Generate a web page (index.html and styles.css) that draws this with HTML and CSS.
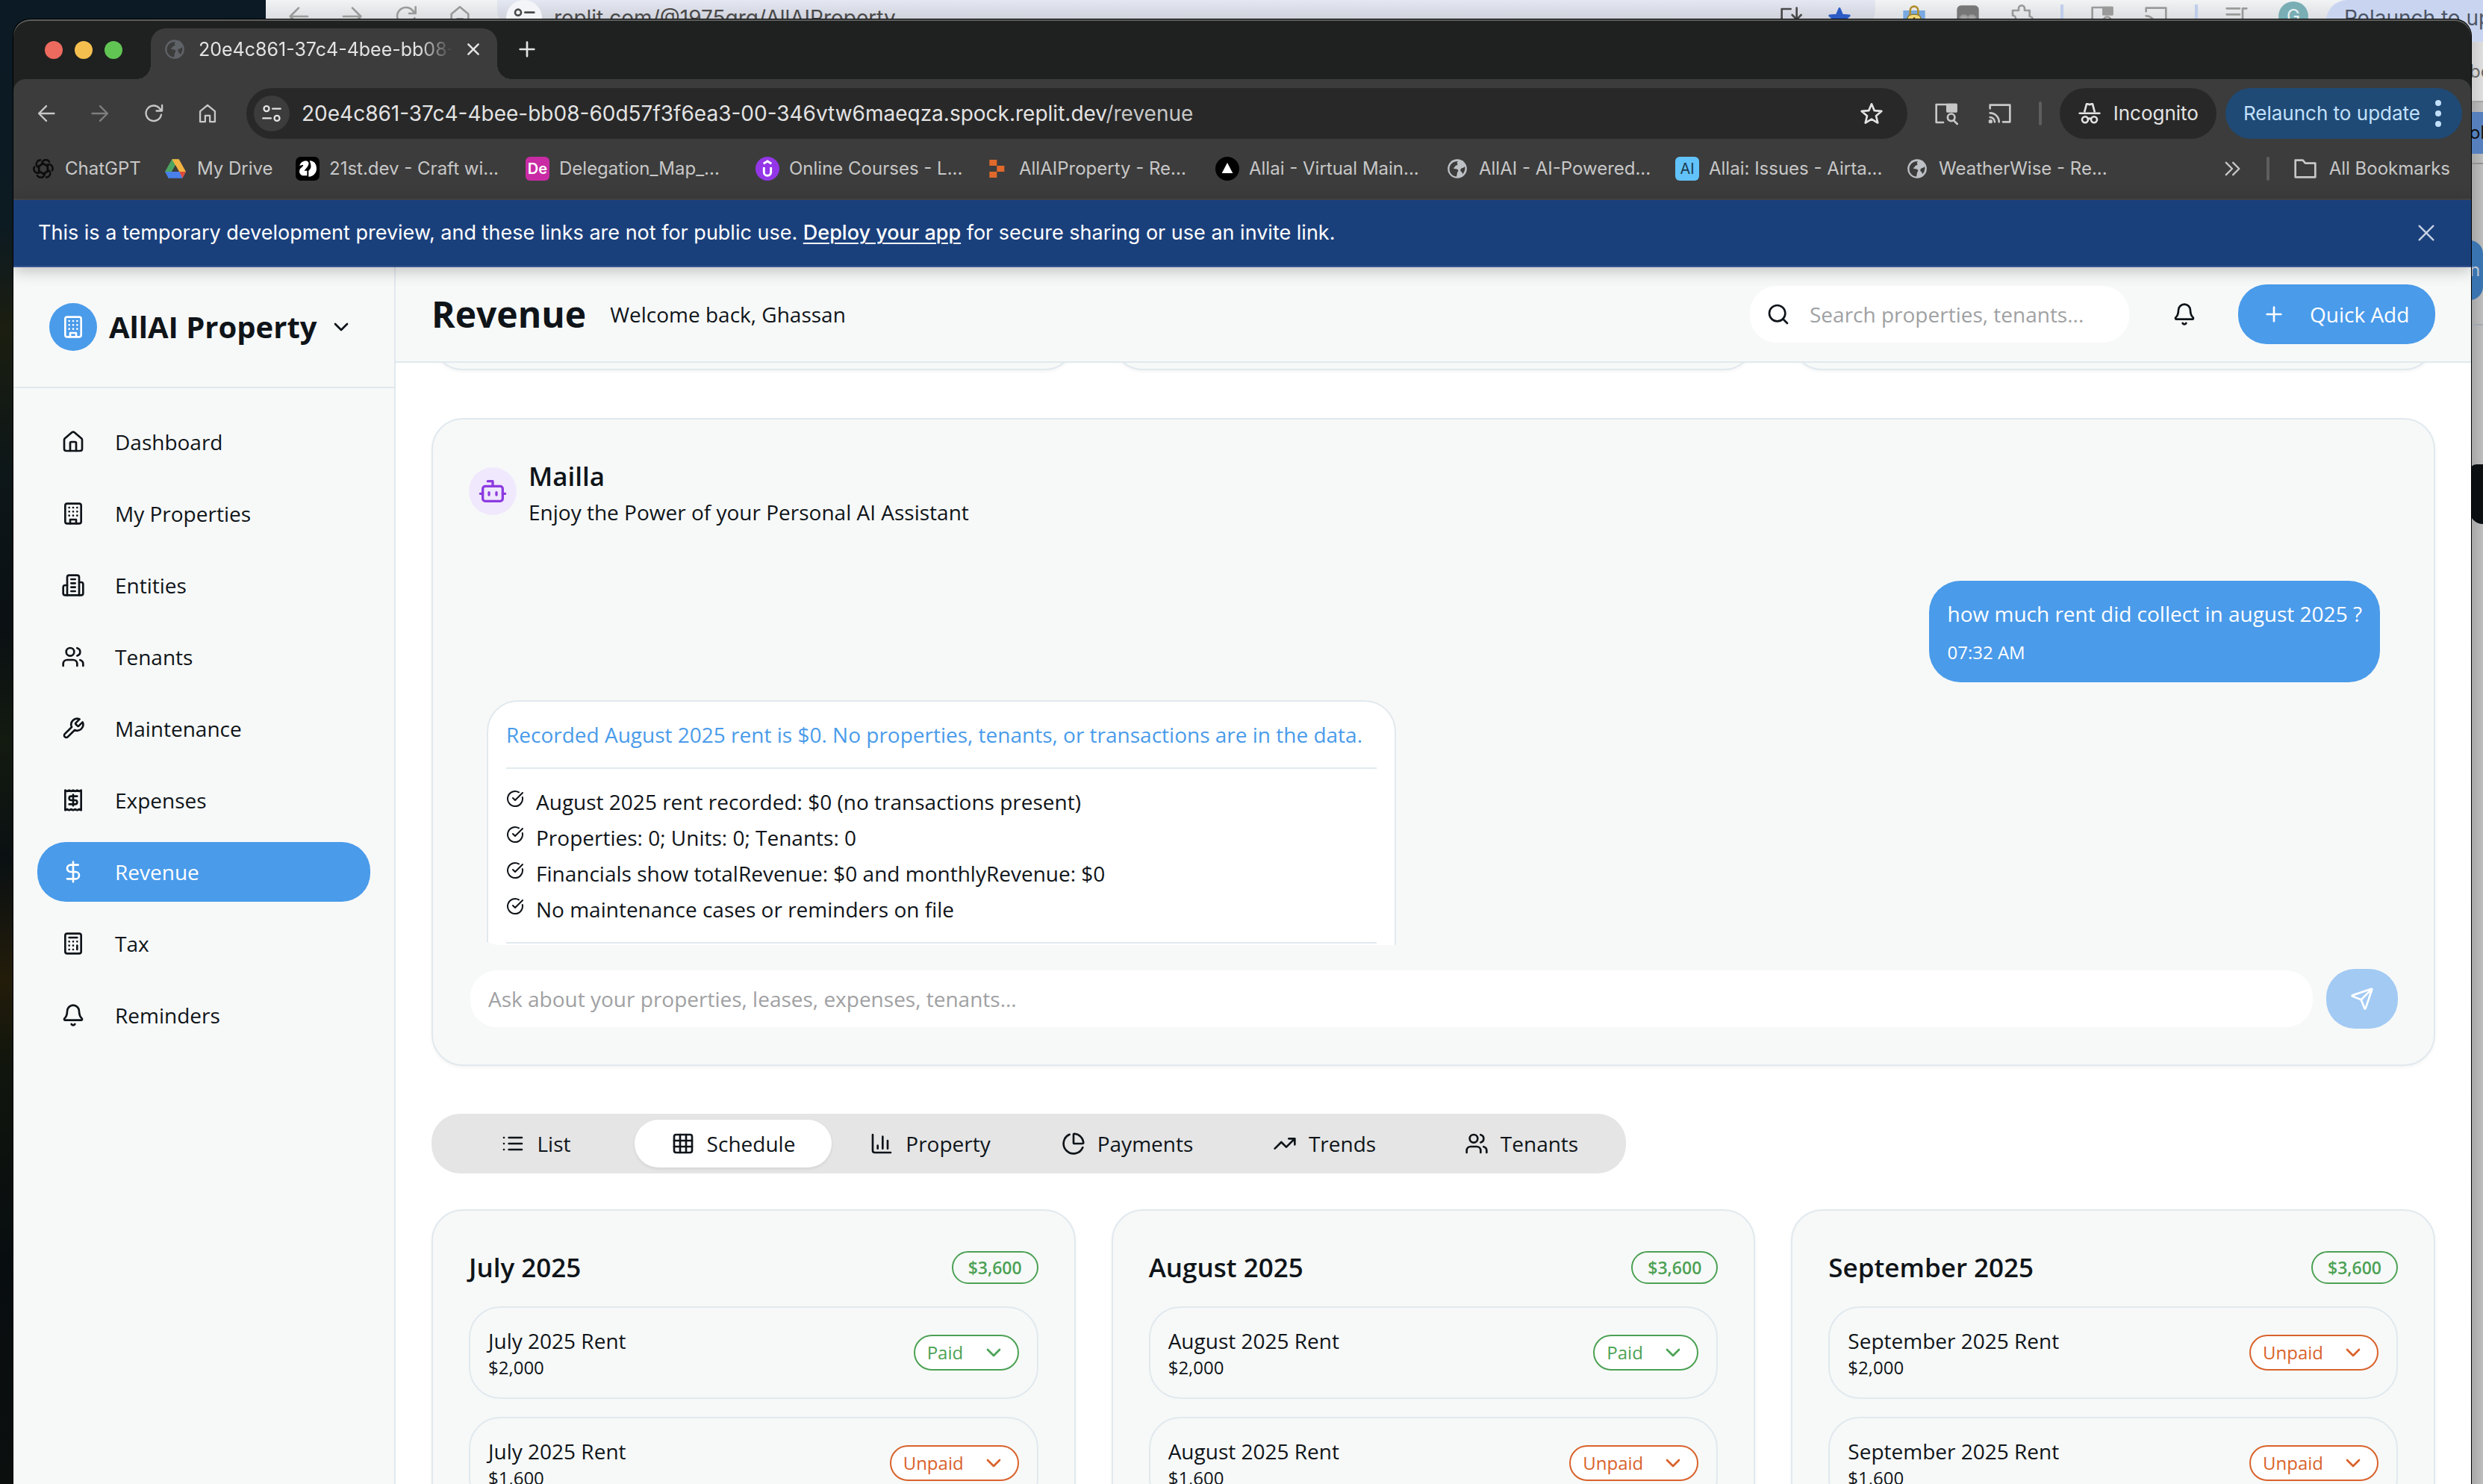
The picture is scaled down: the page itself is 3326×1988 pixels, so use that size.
FILE: index.html
```html
<!DOCTYPE html>
<html lang="en">
<head>
<meta charset="utf-8">
<title>Revenue - AllAI Property</title>
<link rel="stylesheet" href="styles.css">
</head>
<body>
<svg class="sprite" aria-hidden="true">
  <symbol id="house" viewBox="0 0 24 24"><path d="M15 21v-8a1 1 0 0 0-1-1h-4a1 1 0 0 0-1 1v8"/><path d="M3 10a2 2 0 0 1 .709-1.528l7-5.999a2 2 0 0 1 2.582 0l7 5.999A2 2 0 0 1 21 10v9a2 2 0 0 1-2 2H5a2 2 0 0 1-2-2z"/></symbol>
  <symbol id="building" viewBox="0 0 24 24"><rect width="16" height="20" x="4" y="2" rx="2"/><path d="M9 22v-4h6v4M8 6h.01M16 6h.01M12 6h.01M12 10h.01M12 14h.01M16 10h.01M16 14h.01M8 10h.01M8 14h.01"/></symbol>
  <symbol id="offices" viewBox="0 0 24 24"><path d="M6 22V4a2 2 0 0 1 2-2h8a2 2 0 0 1 2 2v18Z"/><path d="M6 12H4a2 2 0 0 0-2 2v6a2 2 0 0 0 2 2h2M18 9h2a2 2 0 0 1 2 2v9a2 2 0 0 1-2 2h-2M10 6h4M10 10h4M10 14h4M10 18h4"/></symbol>
  <symbol id="users" viewBox="0 0 24 24"><path d="M16 21v-2a4 4 0 0 0-4-4H6a4 4 0 0 0-4 4v2"/><circle cx="9" cy="7" r="4"/><path d="M22 21v-2a4 4 0 0 0-3-3.87M16 3.13a4 4 0 0 1 0 7.75"/></symbol>
  <symbol id="wrench" viewBox="0 0 24 24"><path d="M14.7 6.3a1 1 0 0 0 0 1.4l1.6 1.6a1 1 0 0 0 1.4 0l3.77-3.77a6 6 0 0 1-7.94 7.94l-6.91 6.91a2.12 2.12 0 0 1-3-3l6.91-6.91a6 6 0 0 1 7.94-7.94l-3.76 3.76z"/></symbol>
  <symbol id="receipt" viewBox="0 0 24 24"><path d="M4 2v20l2-1 2 1 2-1 2 1 2-1 2 1 2-1 2 1V2l-2 1-2-1-2 1-2-1-2 1-2-1-2 1Z"/><path d="M16 8h-6a2 2 0 1 0 0 4h4a2 2 0 1 1 0 4H8M12 17.5v-11"/></symbol>
  <symbol id="dollar" viewBox="0 0 24 24"><path d="M12 2v20M17 5H9.5a3.5 3.5 0 0 0 0 7h5a3.5 3.5 0 0 1 0 7H6"/></symbol>
  <symbol id="calculator" viewBox="0 0 24 24"><rect width="16" height="20" x="4" y="2" rx="2"/><path d="M8 6h8M16 14v4M16 10h.01M12 10h.01M8 10h.01M12 14h.01M8 14h.01M12 18h.01M8 18h.01"/></symbol>
  <symbol id="bell" viewBox="0 0 24 24"><path d="M10.268 21a2 2 0 0 0 3.464 0M3.262 15.326A1 1 0 0 0 4 17h16a1 1 0 0 0 .74-1.673C19.41 13.956 18 12.499 18 8A6 6 0 0 0 6 8c0 4.499-1.411 5.956-2.738 7.326"/></symbol>
  <symbol id="bot" viewBox="0 0 24 24"><path d="M12 8V4H8"/><rect width="16" height="12" x="4" y="8" rx="2"/><path d="M2 14h2M20 14h2M15 13v2M9 13v2"/></symbol>
  <symbol id="send" viewBox="0 0 24 24"><path d="M14.536 21.686a.5.5 0 0 0 .937-.024l6.5-19a.496.496 0 0 0-.635-.635l-19 6.5a.5.5 0 0 0-.024.937l7.93 3.18a2 2 0 0 1 1.112 1.11zM21.854 2.147l-10.94 10.939"/></symbol>
  <symbol id="search" viewBox="0 0 24 24"><circle cx="11" cy="11" r="8"/><path d="m21 21-4.3-4.3"/></symbol>
  <symbol id="plus" viewBox="0 0 24 24"><path d="M5 12h14M12 5v14"/></symbol>
  <symbol id="chevron" viewBox="0 0 24 24"><path d="m6 9 6 6 6-6"/></symbol>
  <symbol id="check" viewBox="0 0 24 24"><path d="M21.801 10A10 10 0 1 1 17 3.335M9 11l3 3L22 4"/></symbol>
  <symbol id="list" viewBox="0 0 24 24"><path d="M3 12h.01M3 18h.01M3 6h.01M8 12h13M8 18h13M8 6h13"/></symbol>
  <symbol id="grid" viewBox="0 0 24 24"><rect width="18" height="18" x="3" y="3" rx="2"/><path d="M3 9h18M3 15h18M9 3v18M15 3v18"/></symbol>
  <symbol id="bars" viewBox="0 0 24 24"><path d="M3 3v16a2 2 0 0 0 2 2h16M18 17V9M13 17V5M8 17v-3"/></symbol>
  <symbol id="pie" viewBox="0 0 24 24"><path d="M21 12c.552 0 1.005-.449.95-.998a10 10 0 0 0-8.953-8.951c-.55-.055-.998.398-.998.95v8a1 1 0 0 0 1 1zM21.21 15.89A10 10 0 1 1 8 2.83"/></symbol>
  <symbol id="trend" viewBox="0 0 24 24"><path d="M22 7l-8.500 8.500-5-5L2 17M16 7h6v6"/></symbol>
  <symbol id="close" viewBox="0 0 24 24"><path d="M4 4l16 16M20 4L4 20"/></symbol>
  <symbol id="back" viewBox="0 0 24 24"><path d="M21 12H4M12 3.500L3.500 12l8.500 8.500"/></symbol>
  <symbol id="forward" viewBox="0 0 24 24"><path d="M3 12h17M12 3.500l8.500 8.500-8.500 8.500"/></symbol>
  <symbol id="reload" viewBox="0 0 24 24"><path d="M20.500 13.500A8.800 8.800 0 1 1 18.500 6L21 8.500M21.500 2.500v6.500h-6.500"/></symbol>
  <symbol id="home" viewBox="0 0 24 24"><path d="M3.500 9.500L12 2.500l8.500 7V21.500h-5.800v-7H9.300v7H3.500z"/></symbol>
  <symbol id="tune" viewBox="0 0 24 24"><circle cx="6" cy="6.500" r="3"/><path d="M13 6.500h9M2 17.500h9"/><circle cx="18" cy="17.500" r="3"/></symbol>
  <symbol id="star" viewBox="0 0 24 24"><path d="M12 2.500l2.800 6.600 7.200.6-5.500 4.700 1.700 7-6.200-3.700-6.200 3.700 1.700-7L2 9.700l7.200-.6z"/></symbol>
  <symbol id="lens" viewBox="0 0 24 24"><path d="M9 21H2V3h20v7"/><path d="M13 3h9v7h-9z" fill="currentColor"/><circle cx="17" cy="16" r="3.600"/><path d="M19.500 19l3.500 3.500"/></symbol>
  <symbol id="cast" viewBox="0 0 24 24"><path d="M2 7V3.500h20v17h-7M2 11.500a9 9 0 0 1 9 9M2 15.800a4.700 4.700 0 0 1 4.700 4.700"/><circle cx="2.500" cy="20" r="1"/></symbol>
  <symbol id="spy" viewBox="0 0 24 24"><path d="M7 10l2-7.500h1.500L12 3.200l1.500-.7H15l2 7.500" /><path d="M2 11.800h20"/><circle cx="7.500" cy="18.200" r="3"/><circle cx="16.500" cy="18.200" r="3"/><path d="M10.500 17.500q1.500-1 3 0"/></symbol>
  <symbol id="folder" viewBox="0 0 24 24"><path d="M2 3.500h7.500l2.500 3h10v14H2z"/></symbol>
  <symbol id="more" viewBox="0 0 24 24"><path d="M5 5l7 7-7 7M13 5l7 7-7 7"/></symbol>
  <symbol id="puzzle" viewBox="0 0 24 24"><path d="M3 6h6V4a3 3 0 0 1 6 0v2h5v6a3 3 0 0 1 0 6v4H3v-5a3 3 0 0 0 0-6z"/></symbol>
  <symbol id="install" viewBox="0 0 24 24"><path d="M11 3H2v16h20v-3M17 2v11M12.500 9l4.500 4.500L21.500 9"/></symbol>
  <symbol id="queue" viewBox="0 0 24 24"><path d="M2 4h13M2 10h13M2 16h8M22 4h-4v13"/><circle cx="16" cy="18" r="2"/></symbol>
  <symbol id="globe" viewBox="0 0 24 24"><circle cx="12" cy="12" r="11" fill="currentColor" stroke="none"/><path class="land" d="M13 3.500c-1.500 1-1.300 2.200-.8 3 1 .8-.4 1.700-1.700 1.800-1.300.2-.7 2-2 2.200l-1 1c1.500 1 4.500.2 5.500 2 .8 1.300-1 2-1 3.300l-.8 4.200c-5-.3-8.200-4-8.200-8.800C3 7.500 7 3.300 13 3.500zM20.800 9.500c.6 3.200-.4 6.500-2.600 8.800-.6-1-.3-2-1.300-2.600-1.300-.8-1.700-2.200-.7-3.500.8-1 3-.6 4.600-2.700z"/></symbol>
</svg>

<div class="back-window" aria-hidden="true">
  <div class="back-bar">
    <div class="back-nav">
      <svg class="icon"><use href="#back"/></svg>
      <svg class="icon"><use href="#forward"/></svg>
      <svg class="icon"><use href="#reload"/></svg>
      <svg class="icon"><use href="#home"/></svg>
    </div>
    <div class="back-url">
      <span class="back-site"><svg class="icon"><use href="#tune"/></svg></span>
      <span class="grow">replit.com/@1975grg/AllAIProperty</span>
      <svg class="icon"><use href="#install"/></svg>
      <svg class="icon filled"><use href="#star"/></svg>
    </div>
    <div class="back-tools">
      <svg class="icon lock" viewBox="0 0 24 24"><rect x="1" y="6" width="22" height="16" fill="#79a9e0" stroke="none"/><path d="M8 12V6a4 4 0 0 1 8 0v6" stroke="#b08d2c"/><rect x="5" y="10" width="14" height="12" rx="5" fill="#f0d777" stroke="#8a7430" stroke-width="1"/><path d="M12 14v4" stroke="#5d4c1a"/></svg>
      <svg class="icon" viewBox="0 0 24 24"><rect x="1" y="1" width="22" height="22" rx="4" fill="#777" stroke="none"/><circle cx="8" cy="15" r="4" fill="#aaa"/><circle cx="16" cy="15" r="4" fill="#aaa"/></svg>
      <svg class="icon"><use href="#puzzle"/></svg>
      <i class="back-rule"></i>
      <svg class="icon"><use href="#lens"/></svg>
      <svg class="icon"><use href="#cast"/></svg>
      <i class="back-rule"></i>
      <svg class="icon"><use href="#queue"/></svg>
      <span class="avatar">G</span>
    </div>
    <span class="back-update">Relaunch to update</span>
  </div>
  <div class="back-edge">
    <span class="edge-marks">bo</span>
    <span class="edge-tab">oli</span>
    <span class="edge-gap"></span>
    <span class="edge-button">n</span>
    <span class="edge-line"></span>
    <span class="edge-dark"></span>
  </div>
</div>

<div class="window">
  <div class="tab-strip">
    <div class="lights"><i class="light red"></i><i class="light yellow"></i><i class="light green"></i></div>
    <div class="tab">
      <svg class="tab-icon"><use href="#globe"/></svg>
      <span class="tab-title">20e4c861-37c4-4bee-bb08-</span>
      <button class="plain" aria-label="Close tab"><svg class="icon-xs"><use href="#close"/></svg></button>
    </div>
    <button class="plain new-tab" aria-label="New tab"><svg class="icon"><use href="#plus"/></svg></button>
  </div>

  <div class="toolbar">
    <div class="nav-buttons">
      <button class="plain" aria-label="Back"><svg class="icon-sm"><use href="#back"/></svg></button>
      <button class="plain dim" aria-label="Forward"><svg class="icon-sm"><use href="#forward"/></svg></button>
      <button class="plain" aria-label="Reload"><svg class="icon-sm"><use href="#reload"/></svg></button>
      <button class="plain" aria-label="Home"><svg class="icon-sm"><use href="#home"/></svg></button>
    </div>
    <div class="address">
      <button class="plain site-info" aria-label="Site information"><svg class="icon-sm"><use href="#tune"/></svg></button>
      <span class="grow">20e4c861-37c4-4bee-bb08-60d57f3f6ea3-00-346vtw6maeqza.spock.replit.dev<span class="path">/revenue</span></span>
      <button class="plain" aria-label="Bookmark this page"><svg class="icon"><use href="#star"/></svg></button>
    </div>
    <div class="tools">
      <button class="plain" aria-label="Lens"><svg class="icon"><use href="#lens"/></svg></button>
      <button class="plain" aria-label="Cast"><svg class="icon"><use href="#cast"/></svg></button>
    </div>
    <i class="rule"></i>
    <button class="incognito"><svg class="icon"><use href="#spy"/></svg>Incognito</button>
    <button class="update">Relaunch to update<span class="dots"><i></i><i></i><i></i></span></button>
  </div>

  <nav class="bookmarks" aria-label="Bookmarks">
    <a class="bookmark short" href="#"><svg class="fav" viewBox="0 0 24 24"><g fill="none" stroke="#0c0c0c" stroke-width="1.800"><path d="M12 7L7.500 9.600v6.500a4 4 0 0 1-4-6.500"/><path d="M12 7L7.500 9.600v6.500a4 4 0 0 1-4-6.500" transform="rotate(60 12 12)"/><path d="M12 7L7.500 9.600v6.500a4 4 0 0 1-4-6.500" transform="rotate(120 12 12)"/><path d="M12 7L7.500 9.600v6.500a4 4 0 0 1-4-6.500" transform="rotate(180 12 12)"/><path d="M12 7L7.500 9.600v6.500a4 4 0 0 1-4-6.500" transform="rotate(240 12 12)"/><path d="M12 7L7.500 9.600v6.500a4 4 0 0 1-4-6.500" transform="rotate(300 12 12)"/></g></svg>ChatGPT</a>
    <a class="bookmark short" href="#"><svg class="fav" viewBox="0 0 24 24"><path fill="#4da461" d="M8.500 2.500h7L5.300 20.200 1.500 15z"/><path fill="#f2b342" d="M8.500 2.500h7L22.500 15h-7z"/><path fill="#4a80ec" d="M5 15h17.500l-3.500 6.500H5z"/><path fill="#4a80ec" d="M1.500 15H12l-7 6.500z"/><path fill="#e04a3b" d="M16 15h6.500L19 21.500z"/><path fill="#3c3c3c" d="M12 8.500l3.800 6.500H8.200z"/></svg>My Drive</a>
    <a class="bookmark" href="#"><svg class="fav" viewBox="0 0 24 24"><rect width="24" height="24" rx="5"/><path fill="#fff" d="M4 9c1-5 7-6 8.500-4 2 2-1 6-4 9h3v5H7c-3-1-4-4-2.500-7C7 10 8 9 7.500 8zM14 4c5 0 7 4 7 8s-3 8-8 8v-6c3-2 3-5 1-10z"/></svg>21st.dev - Craft wi...</a>
    <a class="bookmark" href="#"><span class="fav badge-de">De</span>Delegation_Map_...</a>
    <a class="bookmark" href="#"><svg class="fav" viewBox="0 0 24 24"><circle cx="12" cy="12" r="12" fill="#9436e8"/><path fill="none" stroke="#fff" stroke-width="2.200" d="M8 7l4-2.500L16 7M8.500 10.500v5a3.500 3.500 0 0 0 7 0v-5"/></svg>Online Courses - L...</a>
    <a class="bookmark" href="#"><svg class="fav" viewBox="0 0 24 24"><path fill="#e0692b" d="M4 3h7.500v6H4zM11.500 9H19v6h-7.500zM4 15h7.500v6H4z"/></svg>AllAIProperty - Re...</a>
    <a class="bookmark" href="#"><svg class="fav" viewBox="0 0 24 24"><circle cx="12" cy="12" r="12"/><path fill="#fff" d="M12 6l5.500 10.500h-11z"/></svg>Allai - Virtual Main...</a>
    <a class="bookmark" href="#"><svg class="fav globe"><use href="#globe"/></svg>AllAI - AI-Powered...</a>
    <a class="bookmark" href="#"><span class="fav badge-ai">AI</span>Allai: Issues - Airta...</a>
    <a class="bookmark" href="#"><svg class="fav globe"><use href="#globe"/></svg>WeatherWise - Re...</a>
    <span class="grow"></span>
    <button class="plain" aria-label="More bookmarks"><svg class="icon-sm"><use href="#more"/></svg></button>
    <i class="rule"></i>
    <a class="all-marks" href="#"><svg class="icon"><use href="#folder"/></svg>All Bookmarks</a>
  </nav>

  <div class="notice">
    <p>This is a temporary development preview, and these links are not for public use. <a href="#">Deploy your app</a> for secure sharing or use an invite link.</p>
    <button class="plain" aria-label="Dismiss"><svg class="icon-sm"><use href="#close"/></svg></button>
  </div>

  <div class="app">
    <aside class="sidebar">
      <button class="brand"><span class="brand-mark"><svg class="icon"><use href="#building"/></svg></span>AllAI Property<svg class="icon"><use href="#chevron"/></svg></button>
      <nav class="menu" aria-label="Main">
        <a href="#"><svg class="icon"><use href="#house"/></svg>Dashboard</a>
        <a href="#"><svg class="icon"><use href="#building"/></svg>My Properties</a>
        <a href="#"><svg class="icon"><use href="#offices"/></svg>Entities</a>
        <a href="#"><svg class="icon"><use href="#users"/></svg>Tenants</a>
        <a href="#"><svg class="icon"><use href="#wrench"/></svg>Maintenance</a>
        <a href="#"><svg class="icon"><use href="#receipt"/></svg>Expenses</a>
        <a class="active" href="#" aria-current="page"><svg class="icon"><use href="#dollar"/></svg>Revenue</a>
        <a href="#"><svg class="icon"><use href="#calculator"/></svg>Tax</a>
        <a href="#"><svg class="icon"><use href="#bell"/></svg>Reminders</a>
      </nav>
    </aside>

    <div class="page">
      <header class="page-head">
        <h1>Revenue</h1>
        <p>Welcome back, Ghassan</p>
        <span class="grow"></span>
        <label class="search"><svg class="icon"><use href="#search"/></svg><input type="search" aria-label="Search" placeholder="Search properties, tenants..."></label>
        <button class="bell" aria-label="Notifications"><svg class="icon"><use href="#bell"/></svg></button>
        <button class="quick-add"><svg class="icon"><use href="#plus"/></svg>Quick Add</button>
      </header>

      <main class="content">
        <div class="summary-tail"><div class="card"></div><div class="card"></div><div class="card"></div></div>

        <section class="card assistant">
          <header class="assistant-head">
            <span class="bot"><svg class="icon-lg"><use href="#bot"/></svg></span>
            <div><h2>Mailla</h2><p>Enjoy the Power of your Personal AI Assistant</p></div>
          </header>
          <div class="chat">
            <div class="question"><p>how much rent did collect in august 2025 ?</p><time>07:32 AM</time></div>
            <div class="answer">
              <p class="answer-lead">Recorded August 2025 rent is $0. No properties, tenants, or transactions are in the data.</p>
              <ul>
                <li><svg class="tick"><use href="#check"/></svg>August 2025 rent recorded: $0 (no transactions present)</li>
                <li><svg class="tick"><use href="#check"/></svg>Properties: 0; Units: 0; Tenants: 0</li>
                <li><svg class="tick"><use href="#check"/></svg>Financials show totalRevenue: $0 and monthlyRevenue: $0</li>
                <li><svg class="tick"><use href="#check"/></svg>No maintenance cases or reminders on file</li>
              </ul>
            </div>
          </div>
          <form class="ask">
            <input type="text" aria-label="Ask Mailla" placeholder="Ask about your properties, leases, expenses, tenants...">
            <button type="button" class="send" aria-label="Send"><svg class="icon"><use href="#send"/></svg></button>
          </form>
        </section>

        <div class="tabs" role="tablist">
          <button role="tab"><svg class="icon"><use href="#list"/></svg>List</button>
          <button role="tab" class="active" aria-selected="true"><svg class="icon"><use href="#grid"/></svg>Schedule</button>
          <button role="tab"><svg class="icon"><use href="#bars"/></svg>Property</button>
          <button role="tab"><svg class="icon"><use href="#pie"/></svg>Payments</button>
          <button role="tab"><svg class="icon"><use href="#trend"/></svg>Trends</button>
          <button role="tab"><svg class="icon"><use href="#users"/></svg>Tenants</button>
        </div>

        <div class="months">
          <section class="card month">
            <header><h2>July 2025</h2><span class="total">$3,600</span></header>
            <div class="rent"><div><h3>July 2025 Rent</h3><p>$2,000</p></div><span class="status paid"><select aria-label="July rent 1 status"><option>Paid</option></select><svg class="icon"><use href="#chevron"/></svg></span></div>
            <div class="rent"><div><h3>July 2025 Rent</h3><p>$1,600</p></div><span class="status unpaid"><select aria-label="July rent 2 status"><option>Unpaid</option></select><svg class="icon"><use href="#chevron"/></svg></span></div>
          </section>
          <section class="card month">
            <header><h2>August 2025</h2><span class="total">$3,600</span></header>
            <div class="rent"><div><h3>August 2025 Rent</h3><p>$2,000</p></div><span class="status paid"><select aria-label="August rent 1 status"><option>Paid</option></select><svg class="icon"><use href="#chevron"/></svg></span></div>
            <div class="rent"><div><h3>August 2025 Rent</h3><p>$1,600</p></div><span class="status unpaid"><select aria-label="August rent 2 status"><option>Unpaid</option></select><svg class="icon"><use href="#chevron"/></svg></span></div>
          </section>
          <section class="card month">
            <header><h2>September 2025</h2><span class="total">$3,600</span></header>
            <div class="rent"><div><h3>September 2025 Rent</h3><p>$2,000</p></div><span class="status unpaid"><select aria-label="September rent 1 status"><option>Unpaid</option></select><svg class="icon"><use href="#chevron"/></svg></span></div>
            <div class="rent"><div><h3>September 2025 Rent</h3><p>$1,600</p></div><span class="status unpaid"><select aria-label="September rent 2 status"><option>Unpaid</option></select><svg class="icon"><use href="#chevron"/></svg></span></div>
          </section>
        </div>
      </main>
    </div>
  </div>
</div>
</body>
</html>
```
FILE: styles.css
```css
:root {
  --primary: #4a9bea;
  --ink: #0f1419;
  --card: #f7f9f8;
  --line: #e1e9ee;
  --muted: #e5e5e5;
  --green: #4ca154;
  --orange: #d9622b;
  --chrome: #3c3c3c;
  --chrome-text: #c7c7c7;
  --ui: Inter, "Liberation Sans", sans-serif;
  --sans: "Open Sans", "Noto Sans", sans-serif;
}

* { box-sizing: border-box; margin: 0; }

body {
  height: 100vh;
  overflow: hidden;
  position: relative;
  display: flex;
  padding: 26px 16px 0 18px;
  background: linear-gradient(180deg, #0b1a24 0%, #0c1a22 15%, #1b1e10 22%, #0d1618 32%, #0a1013 42%, #131a10 50%, #0a1012 58%, #231c0a 66%, #10150d 72%, #080d10 85%, #0b0f0e 100%);
  font-family: var(--sans);
  font-size: 28px;
  line-height: 40px;
  color: var(--ink);
}

h1, h2, h3, p, ul { margin: 0; padding: 0; font-weight: 400; font-size: inherit; }
ul { list-style: none; }
button, input, select { font: inherit; color: inherit; }
button { border: 0; background: none; padding: 0; cursor: pointer; display: inline-flex; align-items: center; }
a { color: inherit; text-decoration: none; }

.sprite { position: absolute; width: 0; height: 0; }
svg { flex: none; }
.icon, .icon-sm, .icon-xs, .icon-lg, .tick {
  fill: none; stroke: currentColor; stroke-width: 2; stroke-linecap: round; stroke-linejoin: round;
}
.icon { width: 32px; height: 32px; }
.icon-lg { width: 40px; height: 40px; }
.icon-sm { width: 28px; height: 28px; }
.icon-xs { width: 20px; height: 20px; stroke-width: 3; }
.tick { width: 24px; height: 24px; margin-top: 4px; }
.filled { fill: currentColor; color: #2c5cc4; }
.grow { flex: 1; }
.land { fill: var(--chrome); stroke: none; }

/* Window behind */
.back-window { position: absolute; inset: 0 0 0 356px; background: #b8b8b9; font-family: var(--ui); }
.back-bar { display: flex; align-items: flex-start; height: 56px; background: linear-gradient(180deg, #f2f3f5, #dcdde0 26px, #e4e4e6); color: #9a9a9a; }
.back-nav { display: flex; gap: 40px; padding: 6px 0 0 28px; }
.back-url { display: flex; flex: 1; gap: 32px; align-items: center; height: 48px; margin-left: 34px; padding: 0 32px 0 12px; border-radius: 0 0 36px 36px; background: linear-gradient(180deg, #e4e8f3, #cfd1da 26px); color: #4a4a4a; }
.back-url .grow { margin-left: -16px; }
.back-site { display: grid; place-items: center; width: 48px; height: 48px; border-radius: 24px; background: #f4f5f8; }
.back-tools { display: flex; align-items: center; gap: 40px; height: 44px; padding: 0 24px 0 36px; }
.back-rule { width: 4px; height: 32px; margin: 0 -4px; background: #bfcdec; }
.avatar { width: 40px; height: 40px; border-radius: 20px; background: #79aeb5; color: #e8f0f0; font-size: 24px; text-align: center; }
.back-update { width: 210px; height: 56px; padding: 4px 0 0 24px; border-radius: 28px 0 0 28px; overflow: hidden; white-space: nowrap; background: #c9d5f0; color: #4d5566; }
.back-edge { display: flex; flex-direction: column; align-items: stretch; width: 18px; margin-left: auto; overflow: hidden; height: calc(100% - 56px); background: linear-gradient(90deg, #a2a2a3, #bdbdbe); }
.back-edge span { flex: none; }
.edge-marks { height: 81px; padding-top: 20px; border-bottom: 2px solid #a2a2a2; background: linear-gradient(90deg, #c9c9c9, #dedede); color: #666; font-size: 24px; }
.edge-tab { height: 56px; margin: 13px 0 12px; padding-top: 8px; background: #5580bd; color: #111; font-size: 24px; }
.edge-gap { height: 104px; border-top: 2px solid #909090; }
.edge-button { height: 80px; padding-top: 20px; border-radius: 0 36px 36px 0; background: #3a74b0; color: #b9c4d0; font-size: 24px; }
.edge-line { height: 188px; margin-top: 32px; border-top: 2px solid #a0a8ae; }
.edge-dark { height: 80px; border-radius: 16px 0 0 32px; background: #0c0f12; }

/* Browser chrome */
.window { position: relative; flex: 1; min-width: 0; display: flex; flex-direction: column; overflow: hidden; border-radius: 22px 22px 0 0; background: #1f2120; box-shadow: 0 0 0 1px #000; font-family: var(--ui); }
.plain { justify-content: center; }
.tab-strip { display: flex; align-items: flex-end; height: 80px; box-shadow: inset 0 2px 0 #5c5e5d; border-radius: 22px 22px 0 0; color: #e3e3e3; }
.lights { display: flex; gap: 16px; width: 184px; padding: 0 0 27px 42px; }
.light { width: 24px; height: 24px; border-radius: 12px; }
.red { background: #ed6a5e; }
.yellow { background: #f5bf4f; }
.green { background: #61c554; }
.tab { position: relative; display: flex; align-items: center; gap: 18px; width: 464px; height: 68px; padding: 0 22px 12px 18px; border-radius: 20px 20px 0 0; background: var(--chrome); }
.tab::before, .tab::after { content: ""; position: absolute; bottom: 0; width: 20px; height: 20px; }
.tab::before { left: -20px; background: radial-gradient(circle at 0 0, transparent 20px, var(--chrome) 20px); }
.tab::after { right: -20px; background: radial-gradient(circle at 100% 0, transparent 20px, var(--chrome) 20px); }
.tab-icon { width: 28px; height: 28px; color: #5f6368; }
.tab-title { flex: 1; font-size: 25px; white-space: nowrap; overflow: hidden; -webkit-mask-image: linear-gradient(90deg, #000 87%, transparent); mask-image: linear-gradient(90deg, #000 87%, transparent); }
.new-tab { padding: 0 0 24px 24px; }

.toolbar { display: flex; align-items: center; height: 92px; padding: 0 12px 0 28px; border-radius: 16px 16px 0 0; background: var(--chrome); color: var(--chrome-text); }
.nav-buttons { display: flex; gap: 44px; width: 284px; padding-left: 2px; }
.dim { color: #7e7e7e; }
.address { display: flex; flex: 1; align-items: center; gap: 16px; height: 68px; padding: 0 32px 0 10px; border-radius: 34px; background: #282828; color: #e3e3e3; }
.site-info { width: 48px; height: 48px; border-radius: 24px; background: var(--chrome); }
.path { color: var(--chrome-text); }
.tools { display: flex; gap: 40px; padding: 0 36px; }
.rule { width: 4px; height: 32px; border-radius: 2px; background: #5e5e5e; }
.incognito, .update { height: 68px; border-radius: 34px; font-size: 26px; }
.incognito { gap: 16px; margin: 0 12px 0 24px; padding: 0 24px; background: #282828; color: #e3e3e3; }
.update { gap: 20px; padding: 0 28px 0 24px; background: #1f4a75; color: #c2e0fb; }
.dots { display: grid; gap: 6px; }
.dots i { width: 8px; height: 8px; border-radius: 4px; background: currentColor; }

.bookmarks { display: flex; align-items: center; height: 70px; padding: 0 28px 12px 24px; background: var(--chrome); color: var(--chrome-text); font-size: 24px; }
.toolbar + .bookmarks { border-bottom: 2px solid #474747; }
.bookmark { display: flex; align-items: center; gap: 13px; width: 308px; white-space: nowrap; }
.bookmark.short { width: 177px; }
.fav { width: 32px; height: 32px; flex: none; }
.globe { padding: 2px; color: #bdc1c6; }
.badge-de, .badge-ai { border-radius: 6px; text-align: center; font-size: 20px; line-height: 32px; }
.badge-de { background: #c92ba4; color: #fff; font-weight: 600; }
.badge-ai { background: #62c3fb; color: #1d3b4d; }
.bookmarks .rule { margin: 0 32px; }
.all-marks { display: flex; align-items: center; gap: 16px; white-space: nowrap; }

.notice { position: relative; z-index: 2; display: flex; align-items: center; justify-content: space-between; height: 90px; padding: 0 46px 0 33px; border-bottom: 2px solid #34528d; background: #1a407c; box-shadow: 0 4px 20px rgb(0 0 0 / 25%); color: #fff; font-size: 27px; }
.notice a { font-weight: 500; text-decoration: underline; text-decoration-thickness: 2px; text-underline-offset: 4px; }
.notice .icon-sm { stroke-width: 2; color: #c9d3e5; }

/* Application */
.app { display: flex; flex: 1; min-height: 0; background: #fff; font-family: var(--sans); }
.sidebar { width: 512px; flex: none; border-right: 2px solid var(--line); background: var(--card); }
.brand { width: 100%; gap: 16px; padding: 48px; border-bottom: 2px solid var(--line); font-size: 40px; line-height: 56px; font-weight: 700; white-space: nowrap; }
.brand-mark, .bot { display: grid; place-items: center; width: 64px; height: 64px; flex: none; border-radius: 32px; }
.brand-mark { background: var(--primary); color: #fff; }
.menu { display: flex; flex-direction: column; gap: 16px; padding: 32px; }
.menu a { display: flex; align-items: center; gap: 40px; height: 80px; padding: 0 32px; border-radius: 38px; font-weight: 500; }
.menu .active { background: var(--primary); color: #fff; }

.page { display: flex; flex: 1; flex-direction: column; min-width: 0; }
.page-head { display: flex; align-items: center; gap: 32px; height: 128px; flex: none; padding: 0 48px; border-bottom: 2px solid var(--line); background: var(--card); }
.page-head h1 { font-size: 48px; line-height: 64px; font-weight: 700; }
.search { display: flex; align-items: center; width: 512px; height: 80px; gap: 26px; padding: 0 22px; border: 2px solid var(--card); border-radius: 38px; background: #fff; }
.search input { flex: 1; min-width: 0; border: 0; padding: 0; background: none; outline: 0; }
::placeholder { color: #a0a1a3; opacity: 1; }
.bell { justify-content: center; width: 80px; height: 80px; }
.quick-add { gap: 32px; min-width: 264px; height: 80px; padding: 0 32px; border-radius: 38px; background: var(--primary); color: #fff; font-weight: 500; }

.content { display: flex; flex: 1; flex-direction: column; min-height: 0; overflow: hidden; padding: 0 48px; }
.content > * { flex: none; }
.card { border: 2px solid var(--line); border-radius: 42px; background: var(--card); box-shadow: 0 2px 4px rgb(0 0 0 / 5%); }
.summary-tail, .months { display: grid; grid-template-columns: repeat(3, 1fr); gap: 48px; }
.summary-tail { grid-template-rows: 10px; align-items: end; margin-bottom: 64px; }
.summary-tail .card { height: 200px; }

.assistant { padding: 48px; }
.assistant-head { display: flex; align-items: center; gap: 16px; margin-bottom: 48px; }
.assistant-head h2, .month h2 { font-size: 35px; line-height: 56px; font-weight: 600; }
.bot { background: #f0e8fd; color: #8c3be0; }
.chat { display: flex; flex-direction: column; align-items: flex-start; gap: 24px; height: 512px; overflow: hidden; padding: 24px; border-radius: 42px; }
.question { align-self: flex-end; padding: 24px; border-radius: 42px; background: var(--primary); color: #fff; }
.question time { display: block; margin-top: 16px; font-size: 24px; line-height: 32px; }
.answer { flex: none; min-width: 1218px; padding: 24px 24px 96px; border: 2px solid var(--line); border-radius: 42px; background: #fff; }
.answer-lead { padding-bottom: 24px; border-bottom: 2px solid var(--line); color: var(--primary); font-weight: 500; }
.answer ul { display: flex; flex-direction: column; gap: 8px; padding: 24px 0; border-bottom: 2px solid var(--line); }
.answer li { display: flex; gap: 16px; }
.ask { display: flex; gap: 16px; margin-top: 32px; }
.ask input { flex: 1; min-width: 0; height: 80px; padding: 0 24px; border: 2px solid var(--card); border-radius: 38px; background: #fff; }
.send { justify-content: center; width: 96px; height: 80px; border-radius: 38px; background: #a2caf3; color: #fff; }

.tabs { display: grid; grid-template-columns: repeat(6, 1fr); width: 1600px; max-width: 100%; height: 80px; margin: 64px 0 48px; padding: 8px; border-radius: 38px; background: var(--muted); }
.tabs button { justify-content: center; gap: 16px; border-radius: 32px; font-weight: 500; }
.tabs .active { background: #fff; box-shadow: 0 2px 4px rgb(0 0 0 / 8%); }

.month { display: flex; flex-direction: column; gap: 24px; height: 480px; padding: 48px; }
.month header, .rent { display: flex; align-items: center; justify-content: space-between; }
.total { padding: 4px 20px; border: 2px solid var(--green); border-radius: 22px; color: var(--green); font-size: 23px; line-height: 32px; font-weight: 600; }
.rent { padding: 24px; border: 2px solid var(--line); border-radius: 42px; }
.rent h3 { font-weight: 500; }
.rent p { font-size: 24px; line-height: 32px; }
.status { display: grid; grid-template-columns: auto 32px; align-items: center; height: 48px; border: 2px solid; border-radius: 24px; background: #fff; padding-right: 16px; }
.status select { grid-area: 1 / 1 / 2 / 3; appearance: none; height: 44px; padding: 0 56px 0 16px; border: 0; background: none; font-size: 24px; line-height: 32px; outline: 0; }
.status .icon { grid-area: 1 / 2; pointer-events: none; }
.paid { color: var(--green); }
.unpaid { color: var(--orange); }
```
